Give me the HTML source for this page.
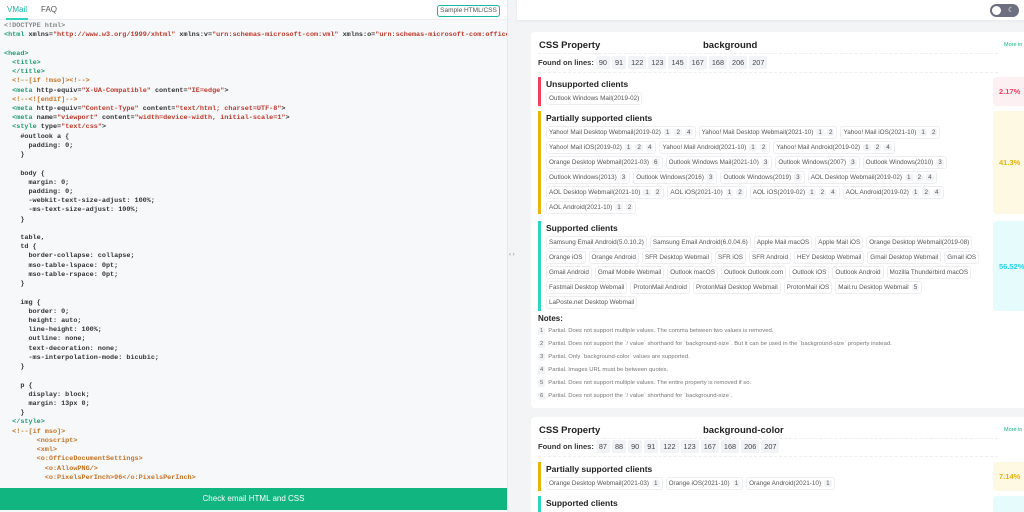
<!DOCTYPE html>
<html style="overflow:hidden;width:1024px;height:512px"><head><style>
*{margin:0;padding:0;box-sizing:border-box}
body{width:1024px;height:512px;overflow:hidden;background:#f3f4f6;font-family:"Liberation Sans",sans-serif;position:relative}
#left{position:absolute;left:0;top:0;width:507px;height:512px;background:#f7f8fa}
#lhead{position:absolute;left:0;top:0;width:507px;height:20px;background:#fff;border-bottom:1px solid #eceef1}
.tab{position:absolute;top:5px;font-size:8px;color:#555}
#code{position:absolute;left:4px;top:22px;font-family:"Liberation Mono",monospace;font-size:6.8px;line-height:9.22px;color:#333;white-space:pre;font-weight:bold;width:503px;overflow:hidden}
.t{color:#1f9d6e}.v{color:#c0392b}.c{color:#c77223}
#btn{position:absolute;left:0;top:488px;width:507px;height:22px;background:#10b57f;color:#fff;font-size:8px;text-align:center;line-height:22px}
#div{position:absolute;left:507px;top:0;width:10px;height:512px;background:#f3f4f6;border-left:1px solid #e6e8eb;font-size:6px;color:#888;}
#rtop{position:absolute;left:517px;top:0;width:507px;height:20px;background:#fff;box-shadow:0 1px 3px #e5e7eb}
#tog{position:absolute;left:990px;top:4px;width:29px;height:13px;border-radius:7px;background:#6b6f80}
.card{position:absolute;left:531px;width:500px;background:#fff;border-radius:4px}
.hd{position:absolute;font-size:9.5px;font-weight:bold;color:#222}
.more{position:absolute;left:473px;font-size:5.5px;color:#10b57f}
.hr{position:absolute;left:7px;width:460px;border-top:1px dashed #eee}
.found{position:absolute;left:7px;font-size:7.5px;font-weight:bold;color:#333;display:flex;align-items:center}
.found span{background:#f1f3f6;font-weight:normal;padding:2px 3px;border-radius:2px;color:#444;margin-left:2px;font-size:7.3px}
.sec{position:absolute;left:7px;width:452px;border-left:3px solid;padding-left:5px}
.sec h4{font-size:8.5px;color:#222;margin:2px 0 3px;font-weight:bold}
.chips{display:flex;flex-wrap:wrap;gap:2px 3px}
.chip{border:1px solid #eceef1;border-radius:3px;font-size:6.35px;color:#555;height:13px;line-height:11px;padding:0 2px;white-space:nowrap}
.chip i{font-style:normal;background:#f1f3f6;padding:0 2px;margin-left:3px;border-radius:2px}
.pct{position:absolute;left:462px;width:40px;border-radius:4px;font-size:7.5px;font-weight:bold;padding-left:6px;display:flex;align-items:center}
.notes{position:absolute;left:7px;font-size:5.9px;color:#777}
.notes div{height:13px;line-height:13px}
.notes b{display:inline-block;background:#f1f3f6;color:#666;font-weight:normal;padding:0 2px;line-height:8px;margin-right:3px;border-radius:2px}
</style></head><body>
<div id="left">
<div id="lhead"><span class="tab" style="left:7px;color:#14b8a6">VMail</span><div style="position:absolute;left:6px;top:18px;width:22px;height:2px;background:#2dd4bf"></div><span class="tab" style="left:41px">FAQ</span>
<span style="position:absolute;left:437px;top:5px;width:63px;height:12px;border:1px solid #14b8a6;border-radius:3px;font-size:6.5px;color:#555;text-align:center;line-height:10px">Sample HTML/CSS</span></div>
<div id="code"><span style="color:#888">&lt;!DOCTYPE html&gt;</span>
<span class="t">&lt;html</span> xmlns=<span class="v">"http://www.w3.org/1999/xhtml"</span> xmlns:v=<span class="v">"urn:schemas-microsoft-com:vml"</span> xmlns:o=<span class="v">"urn:schemas-microsoft-com:office:office"</span>

<span class="t">&lt;head&gt;</span>
  <span class="t">&lt;title&gt;</span>
  <span class="t">&lt;/title&gt;</span>
  <span class="c">&lt;!--[if !mso]&gt;&lt;!--&gt;</span>
  <span class="t">&lt;meta</span> http-equiv=<span class="v">"X-UA-Compatible"</span> content=<span class="v">"IE=edge"</span>&gt;
  <span class="c">&lt;!--&lt;![endif]--&gt;</span>
  <span class="t">&lt;meta</span> http-equiv=<span class="v">"Content-Type"</span> content=<span class="v">"text/html; charset=UTF-8"</span>&gt;
  <span class="t">&lt;meta</span> name=<span class="v">"viewport"</span> content=<span class="v">"width=device-width, initial-scale=1"</span>&gt;
  <span class="t">&lt;style</span> type=<span class="v">"text/css"</span>&gt;
    #outlook a {
      padding: 0;
    }

    body {
      margin: 0;
      padding: 0;
      -webkit-text-size-adjust: 100%;
      -ms-text-size-adjust: 100%;
    }

    table,
    td {
      border-collapse: collapse;
      mso-table-lspace: 0pt;
      mso-table-rspace: 0pt;
    }

    img {
      border: 0;
      height: auto;
      line-height: 100%;
      outline: none;
      text-decoration: none;
      -ms-interpolation-mode: bicubic;
    }

    p {
      display: block;
      margin: 13px 0;
    }
  <span class="t">&lt;/style&gt;</span>
  <span class="c">&lt;!--[if mso]&gt;
        &lt;noscript&gt;
        &lt;xml&gt;
        &lt;o:OfficeDocumentSettings&gt;
          &lt;o:AllowPNG/&gt;
          &lt;o:PixelsPerInch&gt;96&lt;/o:PixelsPerInch&gt;</span></div>
<div id="btn">Check email HTML and CSS</div>
</div>
<div id="div"><span style="position:absolute;left:1px;top:252px">‹ ›</span></div>
<div id="rtop"></div>
<div id="tog"><div style="position:absolute;left:2px;top:2px;width:9px;height:9px;border-radius:50%;background:#fff"></div><div style="position:absolute;left:18px;top:3px;font-size:7px;color:#fff;line-height:7px">☾</div></div>

<div class="card" style="top:32px;height:376px">
<div class="hd" style="left:8px;top:8px">CSS Property</div><div class="hd" style="left:172px;top:8px">background</div><div class="more" style="top:10px">More in</div>
<div class="hr" style="top:21px"></div>
<div class="found" style="top:24px">Found on lines: <span>90</span><span>91</span><span>122</span><span>123</span><span>145</span><span>167</span><span>168</span><span>206</span><span>207</span></div>
<div class="hr" style="top:40px"></div>
<div class="sec" style="top:45px;height:29px;border-color:#f43f5e"><h4>Unsupported clients</h4><div class="chips"><span class="chip">Outlook Windows Mail(2019-02)</span></div></div>
<div class="pct" style="top:45px;height:29px;background:#fdf0f3;color:#f43f5e">2.17%</div>
<div class="sec" style="top:79px;height:103px;border-color:#eab308"><h4>Partially supported clients</h4><div class="chips">
<span class="chip">Yahoo! Mail Desktop Webmail(2019-02)<i>1</i><i>2</i><i>4</i></span><span class="chip">Yahoo! Mail Desktop Webmail(2021-10)<i>1</i><i>2</i></span><span class="chip">Yahoo! Mail iOS(2021-10)<i>1</i><i>2</i></span>
<span class="chip">Yahoo! Mail iOS(2019-02)<i>1</i><i>2</i><i>4</i></span><span class="chip">Yahoo! Mail Android(2021-10)<i>1</i><i>2</i></span><span class="chip">Yahoo! Mail Android(2019-02)<i>1</i><i>2</i><i>4</i></span>
<span class="chip">Orange Desktop Webmail(2021-03)<i>6</i></span><span class="chip">Outlook Windows Mail(2021-10)<i>3</i></span><span class="chip">Outlook Windows(2007)<i>3</i></span><span class="chip">Outlook Windows(2010)<i>3</i></span>
<span class="chip">Outlook Windows(2013)<i>3</i></span><span class="chip">Outlook Windows(2016)<i>3</i></span><span class="chip">Outlook Windows(2019)<i>3</i></span><span class="chip">AOL Desktop Webmail(2019-02)<i>1</i><i>2</i><i>4</i></span>
<span class="chip">AOL Desktop Webmail(2021-10)<i>1</i><i>2</i></span><span class="chip">AOL iOS(2021-10)<i>1</i><i>2</i></span><span class="chip">AOL iOS(2019-02)<i>1</i><i>2</i><i>4</i></span><span class="chip">AOL Android(2019-02)<i>1</i><i>2</i><i>4</i></span>
<span class="chip">AOL Android(2021-10)<i>1</i><i>2</i></span></div></div>
<div class="pct" style="top:79px;height:103px;background:#fef9e3;color:#eab308">41.3%</div>
<div class="sec" style="top:189px;height:90px;border-color:#2dd4bf"><h4>Supported clients</h4><div class="chips">
<span class="chip">Samsung Email Android(5.0.10.2)</span><span class="chip">Samsung Email Android(6.0.04.6)</span><span class="chip">Apple Mail macOS</span><span class="chip">Apple Mail iOS</span><span class="chip">Orange Desktop Webmail(2019-08)</span>
<span class="chip">Orange iOS</span><span class="chip">Orange Android</span><span class="chip">SFR Desktop Webmail</span><span class="chip">SFR iOS</span><span class="chip">SFR Android</span><span class="chip">HEY Desktop Webmail</span><span class="chip">Gmail Desktop Webmail</span><span class="chip">Gmail iOS</span>
<span class="chip">Gmail Android</span><span class="chip">Gmail Mobile Webmail</span><span class="chip">Outlook macOS</span><span class="chip">Outlook Outlook.com</span><span class="chip">Outlook iOS</span><span class="chip">Outlook Android</span><span class="chip">Mozilla Thunderbird macOS</span>
<span class="chip">Fastmail Desktop Webmail</span><span class="chip">ProtonMail Android</span><span class="chip">ProtonMail Desktop Webmail</span><span class="chip">ProtonMail iOS</span><span class="chip">Mail.ru Desktop Webmail<i>5</i></span>
<span class="chip">LaPoste.net Desktop Webmail</span></div></div>
<div class="pct" style="top:189px;height:90px;background:#e6fbfb;color:#22d3ee">56.52%</div>
<div class="hd" style="left:7px;top:282px;font-size:8px">Notes:</div>
<div class="notes" style="top:293px">
<div><b>1</b>Partial. Does not support multiple values. The comma between two values is removed.</div>
<div><b>2</b>Partial. Does not support the `/ value` shorthand for `background-size`. But it can be used in the `background-size` property instead.</div>
<div><b>3</b>Partial. Only `background-color` values are supported.</div>
<div><b>4</b>Partial. Images URL must be between quotes.</div>
<div><b>5</b>Partial. Does not support multiple values. The entire property is removed if so.</div>
<div><b>6</b>Partial. Does not support the `/ value` shorthand for `background-size`.</div>
</div>
</div>

<div class="card" style="top:417px;height:100px">
<div class="hd" style="left:8px;top:8px">CSS Property</div><div class="hd" style="left:172px;top:8px">background-color</div><div class="more" style="top:10px">More in</div>
<div class="hr" style="top:21px"></div>
<div class="found" style="top:23px">Found on lines: <span>87</span><span>88</span><span>90</span><span>91</span><span>122</span><span>123</span><span>167</span><span>168</span><span>206</span><span>207</span></div>
<div class="hr" style="top:39px"></div>
<div class="sec" style="top:45px;height:29px;border-color:#eab308"><h4>Partially supported clients</h4><div class="chips"><span class="chip">Orange Desktop Webmail(2021-03)<i>1</i></span><span class="chip">Orange iOS(2021-10)<i>1</i></span><span class="chip">Orange Android(2021-10)<i>1</i></span></div></div>
<div class="pct" style="top:45px;height:29px;background:#fef9e3;color:#eab308">7.14%</div>
<div class="sec" style="top:79px;height:40px;border-color:#2dd4bf"><h4>Supported clients</h4></div>
<div class="pct" style="top:79px;height:40px;background:#e6fbfb"></div>
</div>
</body></html>
